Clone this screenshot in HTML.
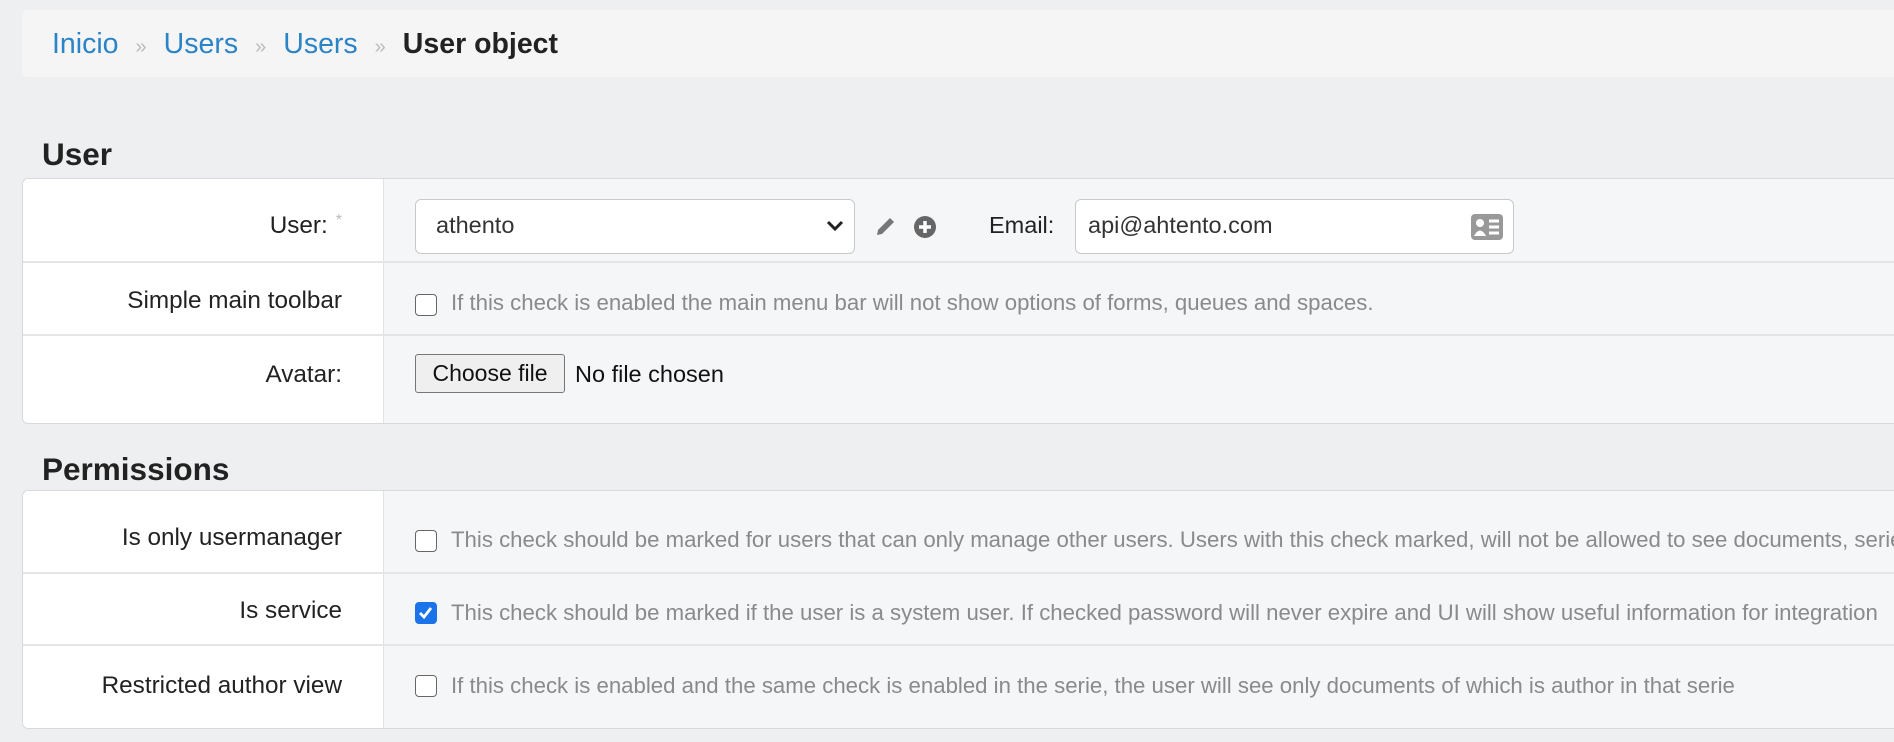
<!DOCTYPE html>
<html><head><meta charset="utf-8"><style>
body{margin:0;width:1894px;height:742px;background:#eeeff1;font-family:"Liberation Sans",sans-serif;overflow:hidden;position:relative;color:#333}
.bc{position:absolute;left:22px;top:10px;width:1900px;height:67px;background:#f5f5f6;border-radius:6px;font-size:28.5px;line-height:69px;padding-left:30px;box-sizing:border-box}
.bc a{color:#2a84c6;text-decoration:none}
.bc .s{color:#bbb;font-size:20px;margin:0 17px}
.bc b{color:#222}
h2{position:absolute;left:42px;margin:0;font-size:31.5px;font-weight:bold;color:#222}
.panel{position:absolute;left:22px;width:1900px;background:#f5f6f8;border:1px solid #d8d9dc;border-radius:6px;box-sizing:border-box;overflow:hidden}
.row{position:absolute;left:0;right:0;border-bottom:2px solid #e4e5e7;box-sizing:border-box}
.row:last-child{border-bottom:none}
.lab{position:absolute;left:0;top:0;bottom:0;width:361px;background:#fff;border-right:1px solid #e2e3e5;text-align:right;box-sizing:border-box;padding-right:41px;font-size:24.3px;display:flex;align-items:center;justify-content:flex-end;color:#222}
.cb{position:absolute;left:392px;width:22px;height:22px;border:1.5px solid #666;border-radius:4px;background:#fff;box-sizing:border-box}
.help{position:absolute;left:428px;font-size:22.2px;color:#8a8a8a;white-space:nowrap}
.inp{position:absolute;background:#fff;border:1.5px solid #c9c9cc;border-radius:6px;box-sizing:border-box;font-size:23.5px;line-height:51px;padding-left:20px}
</style></head><body>
<div class="bc"><a>Inicio</a><span class="s">»</span><a>Users</a><span class="s">»</span><a>Users</a><span class="s">»</span><b>User object</b></div>
<h2 style="top:136px">User</h2>
<div class="panel" style="top:178px;height:246px">
 <div class="row" style="top:0;height:84px"><div class="lab" style="padding-top:12px">User:<span style="color:#bbb;font-size:16px;margin-left:8px;margin-top:-10px">*</span></div>
  <div class="inp" style="left:392px;top:20px;width:440px;height:55px">athento<svg style="position:absolute;right:10px;top:20px" width="18" height="12" viewBox="0 0 18 12"><path d="M2 2 L9 9 L16 2" stroke="#222" stroke-width="3" fill="none"/></svg></div>
  <svg style="position:absolute;left:850px;top:36px" width="24" height="24" viewBox="0 0 24 24"><path d="M4 20 L5 15 L17 3 L21 7 L9 19 Z" fill="#777"/></svg>
  <svg style="position:absolute;left:890px;top:36px" width="24" height="24" viewBox="0 0 24 24"><circle cx="12" cy="12" r="11" fill="#666"/><path d="M12 6v12M6 12h12" stroke="#fff" stroke-width="3.5"/></svg>
  <div style="position:absolute;left:966px;top:33px;font-size:23.5px;color:#222">Email:</div>
  <div class="inp" style="left:1052px;top:20px;width:439px;height:55px;color:#333;padding-left:12px">api@ahtento.com<svg style="position:absolute;right:10px;top:14px" width="32" height="26" viewBox="0 0 32 26"><rect x="0" y="0" width="32" height="26" rx="4" fill="#999"/><circle cx="9" cy="9" r="4" fill="#fff"/><path d="M3 22 Q9 11 15 22Z" fill="#fff"/><path d="M18 7h10M18 13h10M18 19h10" stroke="#fff" stroke-width="3"/></svg></div>
 </div>
 <div class="row" style="top:84px;height:73px"><div class="lab" style="padding-top:4px">Simple main toolbar</div><div class="cb" style="top:31px"></div><div class="help" style="top:27px">If this check is enabled the main menu bar will not show options of forms, queues and spaces.</div></div>
 <div class="row" style="top:157px;height:89px"><div class="lab" style="padding-bottom:12px">Avatar:</div>
  <div style="position:absolute;left:392px;top:18px;width:150px;height:39px;border:1.5px solid #777;border-radius:3px;background:#efefef;box-sizing:border-box;font-size:23px;line-height:36px;text-align:center;color:#111">Choose file</div>
  <div style="position:absolute;left:552px;top:25px;font-size:23.5px;color:#111">No file chosen</div></div>
</div>
<h2 style="top:451px">Permissions</h2>
<div class="panel" style="top:490px;height:239px">
 <div class="row" style="top:0;height:83px"><div class="lab" style="padding-top:12px">Is only usermanager</div><div class="cb" style="top:39px"></div><div class="help" style="top:36px">This check should be marked for users that can only manage other users. Users with this check marked, will not be allowed to see documents, series, etc.</div></div>
 <div class="row" style="top:83px;height:72px"><div class="lab" style="padding-top:4px">Is service</div><div class="cb" style="top:28px;background:#1a73e8;border-color:#1a73e8"><svg width="19" height="19" viewBox="0 0 19 19" style="position:absolute;left:0;top:0"><path d="M4 10 L8 14 L15 5" stroke="#fff" stroke-width="2.8" fill="none"/></svg></div><div class="help" style="top:26px">This check should be marked if the user is a system user. If checked password will never expire and UI will show useful information for integration</div></div>
 <div class="row" style="top:155px;height:84px"><div class="lab" style="padding-bottom:4px">Restricted author view</div><div class="cb" style="top:29px"></div><div class="help" style="top:27px">If this check is enabled and the same check is enabled in the serie, the user will see only documents of which is author in that serie</div></div>
</div>
</body></html>
